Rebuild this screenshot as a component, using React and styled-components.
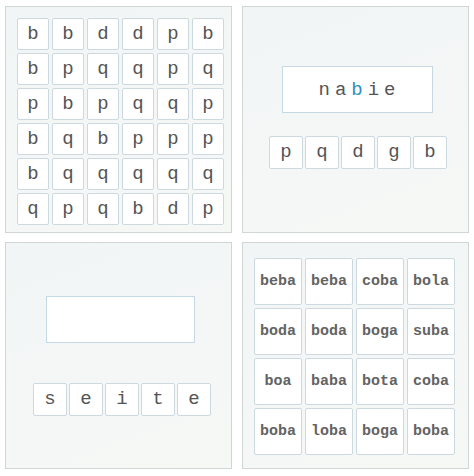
import React from 'react';
import styled, { createGlobalStyle } from 'styled-components'

const Global = createGlobalStyle`
  html, body {
    margin: 0;
    padding: 0;
    background: #fff;
  }
  body {
    font-family: "Courier New", "Liberation Mono", monospace;
  }
`

const letterGrid = [
  'bbddpb',
  'bpqqpq',
  'pbpqqp',
  'bqbppp',
  'bqqqqq',
  'qpqbdp',
]

const words = [
  'beba', 'beba', 'coba', 'bola',
  'boda', 'boda', 'boga', 'suba',
  'boa', 'baba', 'bota', 'coba',
  'boba', 'loba', 'boga', 'boba',
]

const Page = styled.div`
  display: grid;
  grid-template-columns: 227px 227px;
  grid-template-rows: 227px 227px;
  column-gap: 10px;
  row-gap: 9px;
  padding: 6px 0 0 5px;
`

const Panel = styled.div`
  box-sizing: border-box;
  border: 1px solid #d0d6d5;
  background: linear-gradient(160deg, #f1f5f5 0%, #f4f7f6 60%, #f6f8f5 100%);
  display: flex;
  flex-direction: column;
  align-items: ${p => (p.$center ? 'center' : 'flex-start')};
  padding: ${p => p.$pad || '0'};
`

const Grid = styled.div`
  display: grid;
  grid-template-columns: repeat(${p => p.$cols}, ${p => p.$size}px);
  grid-auto-rows: ${p => p.$rowSize || p.$size}px;
  gap: ${p => p.$gap}px;
`

const Cell = styled.div`
  box-sizing: border-box;
  background: #fff;
  border: 1px solid #ccdae0;
  border-radius: 2px;
  display: flex;
  align-items: center;
  justify-content: center;
  color: ${p => (p.$bold ? '#636363' : '#555')};
  font-size: ${p => p.$font}px;
  font-weight: ${p => (p.$bold ? 700 : 400)};
  line-height: 1;
`

const WordBox = styled.div`
  box-sizing: border-box;
  width: ${p => p.$w}px;
  height: 47px;
  margin-top: ${p => p.$top}px;
  margin-left: ${p => p.$shift || 0}px;
  background: #fff;
  border: 1px solid #c6d8e2;
  display: flex;
  align-items: center;
  justify-content: center;
  font-size: 19px;
  letter-spacing: 5px;
  padding-left: 5px;
  color: #555;
`

const Hit = styled.span`
  color: #2f8fc4;
`

const Tiles = styled.div`
  display: flex;
  gap: 2px;
  margin-top: ${p => p.$top}px;
  margin-left: ${p => p.$shift || 0}px;
`

const Tile = styled(Cell)`
  width: 34px;
  height: 33px;
  font-size: 19px;
`

export default function App() {
  return (
    <>
      <Global />
      <Page>
        <Panel $pad="11px 0 0 11px">
          <Grid $cols={6} $size={32} $gap={3}>
            {letterGrid.flatMap((row, r) =>
              row.split('').map((ch, c) => (
                <Cell key={`${r}-${c}`} $font={19}>{ch}</Cell>
              ))
            )}
          </Grid>
        </Panel>

        <Panel $center>
          <WordBox $w={151} $top={59} $shift={3}>
            na<Hit>b</Hit>ie
          </WordBox>
          <Tiles $top={23} $shift={5}>
            {'pqdgb'.split('').map((ch, i) => <Tile key={i}>{ch}</Tile>)}
          </Tiles>
        </Panel>

        <Panel $center>
          <WordBox $w={149} $top={53} $shift={3} />
          <Tiles $top={40} $shift={7}>
            {'seite'.split('').map((ch, i) => <Tile key={i}>{ch}</Tile>)}
          </Tiles>
        </Panel>

        <Panel $pad="15px 0 0 11px">
          <Grid $cols={4} $size={48} $rowSize={47} $gap={3}>
            {words.map((w, i) => (
              <Cell key={i} $font={15} $bold>{w}</Cell>
            ))}
          </Grid>
        </Panel>
      </Page>
    </>
  )
}
